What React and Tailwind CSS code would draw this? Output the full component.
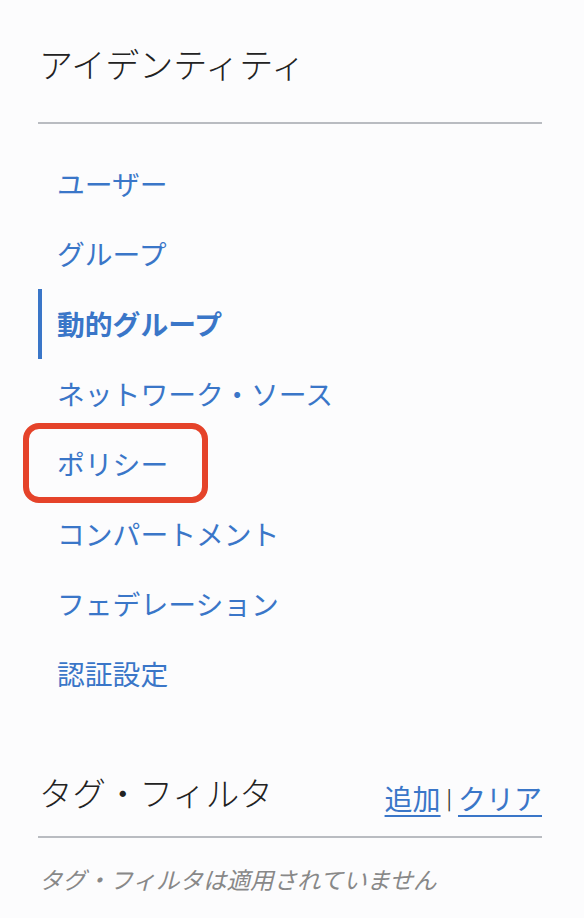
const navItems = [
  'ユーザー',
  'グループ',
  '動的グループ',
  'ネットワーク・ソース',
  'ポリシー',
  'コンパートメント',
  'フェデレーション',
  '認証設定',
]

const font = { fontFamily: '"Noto Sans CJK JP", "Noto Sans", sans-serif' }

export default function App() {
  const active = '動的グループ'

  return (
    <div className="relative min-h-[918px] w-[584px] bg-[#fcfcfd] pl-[38px] pr-[42px]" style={font}>
      {/* Identity header */}
      <div className="flex h-[122px] items-center pt-[6px]">
        <h2 className="pl-[1px] text-[34px] font-light leading-none text-[#222]">
          アイデンティティ
        </h2>
      </div>
      <div className="h-[2px] bg-[#b9bcc1]" />

      {/* Nav */}
      <ul className="pt-[25px]">
        {navItems.map((item) => (
          <li
            key={item}
            className={`flex h-[70px] items-center border-l-4 pl-[15px] text-[27.8px] leading-none ${
              item === active
                ? 'border-[#3a76c8] font-bold text-[#3a76c8]'
                : 'border-transparent text-[#3a76c8]'
            }`}
          >
            <a href="#">{item}</a>
          </li>
        ))}
      </ul>

      {/* Tag filters */}
      <div className="mt-[66px] flex items-end justify-between pb-[21px]">
        <h3 className="mb-[6px] pl-[1px] text-[33.5px] font-light leading-none text-[#222]">タグ・フィルタ</h3>
        <div className="mb-[3px] flex items-center text-[28px] leading-none text-[#3a76c8]">
          <a href="#" className="underline underline-offset-[5px]">追加</a>
          <span className="mx-[6px] text-[20px] text-[#333]">|</span>
          <a href="#" className="underline underline-offset-[5px]">クリア</a>
        </div>
      </div>
      <div className="h-[2px] bg-[#b9bcc1]" />
      <p className="pl-[1px] pt-[30px] text-[23.5px] italic leading-none text-[#888]">
        タグ・フィルタは適用されていません
      </p>

      {/* Annotation box */}
      <div className="absolute left-[23px] top-[423px] h-[80px] w-[185px] rounded-[16px] border-[6px] border-[#e5432a]" />
    </div>
  )
}
